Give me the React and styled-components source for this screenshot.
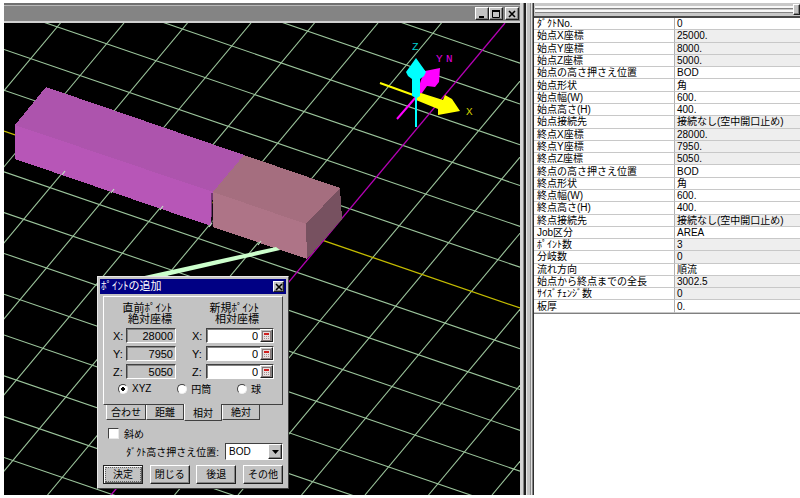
import React, { useState } from "react";
import styled, { createGlobalStyle, css } from "styled-components";

const rows = [
  { label: "ﾀﾞｸﾄNo.", value: "0" },
  { label: "始点X座標", value: "25000.", locked: true },
  { label: "始点Y座標", value: "8000.", locked: true },
  { label: "始点Z座標", value: "5000.", locked: true },
  { label: "始点の高さ押さえ位置", value: "BOD" },
  { label: "始点形状", value: "角" },
  { label: "始点幅(W)", value: "600." },
  { label: "始点高さ(H)", value: "400." },
  { label: "始点接続先", value: "接続なし(空中開口止め)", locked: true },
  { label: "終点X座標", value: "28000.", locked: true },
  { label: "終点Y座標", value: "7950.", locked: true },
  { label: "終点Z座標", value: "5050.", locked: true },
  { label: "終点の高さ押さえ位置", value: "BOD" },
  { label: "終点形状", value: "角" },
  { label: "終点幅(W)", value: "600." },
  { label: "終点高さ(H)", value: "400." },
  { label: "終点接続先", value: "接続なし(空中開口止め)", locked: true },
  { label: "Job区分", value: "AREA" },
  { label: "ﾎﾟｲﾝﾄ数", value: "3", locked: true },
  { label: "分岐数", value: "0", locked: true },
  { label: "流れ方向", value: "順流" },
  { label: "始点から終点までの全長", value: "3002.5", locked: true },
  { label: "ｻｲｽﾞﾁｪﾝｼﾞ数", value: "0", locked: true },
  { label: "板厚", value: "0." }
];

const lastPoint = { X: "28000", Y: "7950", Z: "5050" };

// grid lines, k = 0 is the axis
const xLines = [-9, -8, -7, -6, -5, -4, -3, -2, -1, 1, 2, 3, 4, 5, 6, 7, 8];
const yLines = [-8, -7, -6, -5, -4, -3, -2, -1, 1, 2, 3, 4, 5, 6];
const ticks = [
  [62, 175],
  [111, 193],
  [160, 210],
  [209, 227],
  [258, 245]
];

const Scene = () => (
  <Drawing
    viewBox="4 23 516 472"
    preserveAspectRatio="xMinYMin slice"
    role="img"
    aria-label="3D view"
  >
    <g stroke="#9cc59c" strokeWidth="1.1">
      {xLines.map((k) => (
        <line key={k} x1="4" y1={131 + k * 40.8} x2="520" y2={308 + k * 40.8} />
      ))}
      {yLines.map((k) => (
        <line
          key={k}
          x1={505 + k * 63.5}
          y1="23"
          x2={111 + k * 63.5}
          y2="495"
        />
      ))}
    </g>
    <line x1="4" y1="131" x2="520" y2="308" stroke="#c4bc00" strokeWidth="1.3" />
    <line x1="505" y1="23" x2="111" y2="495" stroke="#b400b4" strokeWidth="1.3" />

    <g shapeRendering="crispEdges">
      <polygon points="15,125 46,87 244,155 213,192" fill="#ad54ad" />
      <polygon points="15,125 213,192 211,226 15,159" fill="#b756b7" />
      <polygon points="213,192 244,155 340,188 306,224" fill="#a56e7f" />
      <polygon points="213,192 306,224 307,259 213,227" fill="#ae7487" />
      <polygon points="306,224 340,188 342,219 307,259" fill="#775160" />
    </g>
    <line x1="212" y1="193" x2="212" y2="226" stroke="#2c182c" />
    <g stroke="#c2ddc4" strokeWidth="1.2">
      {ticks.map(([x, y]) => (
        <line key={x} x1={x} y1={y} x2={x + 3} y2={y - 4} />
      ))}
    </g>
    <polygon points="140,277 276,247 280,250 162,277" fill="#ccffcc" />

    <line x1="416" y1="97" x2="397" y2="119" stroke="#ff00ff" strokeWidth="2" />
    <polygon
      points="440,68 425,71 421,80 416,96 422,93 427,86 435,87 439,82"
      fill="#ff00ff"
    />
    <line x1="380" y1="83" x2="416" y2="96" stroke="#ffff00" strokeWidth="2" />
    <polygon
      points="416,95 421,93 443,100 445,95 452,99 460,111 438,115 438,109 416,100"
      fill="#ffff00"
    />
    <line x1="416" y1="95" x2="416" y2="127" stroke="#00ffff" strokeWidth="2" />
    <polygon
      points="416,58 426,72 424,76 420,79 420,96 417,98 412,96 412,79 408,76 406,72"
      fill="#00ffff"
    />
    <AxisText x="412" y="50" fill="#00d0d0">
      Z
    </AxisText>
    <AxisText x="436" y="62" fill="#e000e0">
      Y
    </AxisText>
    <AxisText x="446" y="62" fill="#e000e0">
      N
    </AxisText>
    <AxisText x="466" y="115" fill="#d0d000">
      X
    </AxisText>
  </Drawing>
);

const CloseIcon = () => (
  <svg width="8" height="8" viewBox="0 0 8 8" aria-hidden="true">
    <path d="M1 1L7 7M7 1L1 7" stroke="#000" strokeWidth="1.6" />
  </svg>
);

const CalcIcon = () => (
  <svg width="9" height="10" viewBox="0 0 9 10" aria-hidden="true">
    <rect x="0.5" y="0.5" width="8" height="9" fill="#e8e0e0" stroke="#857878" />
    <path d="M2 3H7" stroke="#d02020" strokeWidth="2" />
    <path d="M2 5.5H7M2 7.5H7" stroke="#a09090" strokeDasharray="1 1" />
  </svg>
);

const PointDialog = () => {
  const [mode, setMode] = useState("XYZ");
  const [tab, setTab] = useState("相対");
  const [offset, setOffset] = useState({ X: "0", Y: "0", Z: "0" });

  return (
    <Dialog role="dialog" aria-labelledby="dialogTitle">
      <DialogTitle>
        <span id="dialogTitle">ﾎﾟｲﾝﾄの追加</span>
        <DialogClose aria-label="Close">
          <CloseIcon />
        </DialogClose>
      </DialogTitle>
      <DialogBody>
        <Page>
          <Columns>
            <Column>
              <Heading>
                <span>直前ﾎﾟｲﾝﾄ</span>
                <span>絶対座標</span>
              </Heading>
              {["X", "Y", "Z"].map((axis) => (
                <Field key={axis}>
                  <label htmlFor={"last" + axis}>{axis}:</label>
                  <Sunken $locked>
                    <NumberInput id={"last" + axis} value={lastPoint[axis]} readOnly />
                  </Sunken>
                </Field>
              ))}
            </Column>
            <Column $wide>
              <Heading $wide>
                <span>新規ﾎﾟｲﾝﾄ</span>
                <span>相対座標</span>
              </Heading>
              {["X", "Y", "Z"].map((axis) => (
                <Field key={axis}>
                  <label htmlFor={"new" + axis}>{axis}:</label>
                  <Sunken>
                    <NumberInput
                      id={"new" + axis}
                      value={offset[axis]}
                      onChange={(e) =>
                        setOffset({ ...offset, [axis]: e.target.value })
                      }
                    />
                    <CalcButton aria-label={"Calculator " + axis}>
                      <CalcIcon />
                    </CalcButton>
                  </Sunken>
                </Field>
              ))}
            </Column>
          </Columns>
          <Modes>
            {["XYZ", "円筒", "球"].map((name) => (
              <Mode key={name}>
                <Radio
                  type="radio"
                  name="mode"
                  checked={mode === name}
                  onChange={() => setMode(name)}
                />
                {name}
              </Mode>
            ))}
          </Modes>
        </Page>
        <Tabs role="tablist">
          {["合わせ", "距離", "相対", "絶対"].map((name) => (
            <Tab
              key={name}
              role="tab"
              aria-selected={tab === name}
              $active={tab === name}
              onClick={() => setTab(name)}
            >
              {name}
            </Tab>
          ))}
        </Tabs>
        <Slant>
          <Check type="checkbox" />
          斜め
        </Slant>
        <HeightRow>
          <label htmlFor="heightPos">ﾀﾞｸﾄ高さ押さえ位置:</label>
          <SelectBox>
            <Select id="heightPos" defaultValue="BOD">
              <option>BOD</option>
            </Select>
            <Arrow>
              <svg width="7" height="4" viewBox="0 0 7 4" aria-hidden="true">
                <path d="M0 0H7L3.5 4Z" />
              </svg>
            </Arrow>
          </SelectBox>
        </HeightRow>
        <Actions>
          <Button $primary>
            <span>決定</span>
          </Button>
          <Button>閉じる</Button>
          <Button>後退</Button>
          <Button>その他</Button>
        </Actions>
      </DialogBody>
    </Dialog>
  );
};

const App = () => {
  return (
    <>
      <GlobalStyle />
      <Container>
        <ViewWindow>
          <TitleBar>
            <WindowButton aria-label="Minimize">
              <svg width="8" height="8" viewBox="0 0 8 8" aria-hidden="true">
                <path d="M1 7H6" stroke="#000" strokeWidth="2" />
              </svg>
            </WindowButton>
            <WindowButton aria-label="Maximize">
              <svg width="8" height="8" viewBox="0 0 8 8" aria-hidden="true">
                <path d="M0.5 1V7.5H7.5V1" fill="none" stroke="#000" />
                <path d="M0 1H8" stroke="#000" strokeWidth="2" />
              </svg>
            </WindowButton>
            <WindowButton aria-label="Close" $apart>
              <CloseIcon />
            </WindowButton>
          </TitleBar>
          <View>
            <Scene />
            <PointDialog />
          </View>
        </ViewWindow>
        <Splitter />
        <Panel>
          <Grip>
            <Ridges />
            <GripButton aria-label="Close panel" />
          </Grip>
          <Table>
            <tbody>
              {rows.map((row) => (
                <tr key={row.label}>
                  <Label scope="row">{row.label}</Label>
                  <Value $locked={row.locked}>{row.value}</Value>
                </tr>
              ))}
            </tbody>
          </Table>
        </Panel>
      </Container>
    </>
  );
};

export default App;

const GlobalStyle = createGlobalStyle`
  * {
    box-sizing: border-box;
  }
  body {
    margin: 0;
    background: white;
    color: black;
    font-family: "Liberation Sans", "Noto Sans CJK JP", sans-serif;
    font-size: 10px;
  }
  button, input, select {
    font: inherit;
    color: inherit;
    margin: 0;
    padding: 0;
    border-radius: 0;
  }
`;

const raised = css`
  background: #c3c3c3;
  border: 1px solid;
  border-color: white #202020 #202020 white;
  box-shadow: inset -1px -1px 0 #848484;
`;

const Container = styled.div`
  min-height: 100vh;
  padding: 3px 0 3px 4px;
  display: flex;
`;

const ViewWindow = styled.div`
  flex: 1;
  min-width: 0;
  display: flex;
  flex-direction: column;
  border-top: 2px solid #707070;
`;

const TitleBar = styled.div`
  height: 18px;
  display: flex;
  align-items: center;
  justify-content: flex-end;
  padding-right: 1px;
  background: #848484;
  border-top: 1px solid #b8b8b8;
  border-bottom: 2px solid #d0d0d0;
`;

const WindowButton = styled.button`
  ${raised}
  width: 14px;
  height: 13px;
  display: flex;
  align-items: center;
  justify-content: center;
  margin-left: ${(p) => (p.$apart ? "2px" : "0")};
`;

const View = styled.div`
  flex: 1;
  min-height: 472px;
  position: relative;
  background: black;
  overflow: hidden;
`;

const Drawing = styled.svg`
  position: absolute;
  inset: 0;
  width: 100%;
  height: 100%;
`;

const AxisText = styled.text`
  font-family: "Liberation Mono", monospace;
  font-size: 11px;
`;

const Splitter = styled.div`
  width: 14px;
  background: linear-gradient(
    to right,
    #d4d4d4 0 3px,
    #848484 3px 4px,
    #202020 4px 6px,
    #e8e8e8 6px 7px,
    #c3c3c3 7px 10px,
    #909090 10px 11px,
    #e0e0e0 11px 12px,
    #848484 12px 13px,
    #303030 13px 14px
  );
`;

const Panel = styled.div`
  flex: 0 1 266px;
  min-width: 0;
`;

const Grip = styled.div`
  height: 15px;
  display: flex;
  align-items: center;
  padding-left: 1px;
  background: #c8c8c8;
  border-bottom: 2px solid #484848;
`;

const Ridges = styled.div`
  flex: 1;
  height: 8px;
  background: linear-gradient(
    #f8f8f8 0 2px,
    #848484 2px 3px,
    #c8c8c8 3px 4px,
    #f8f8f8 4px 6px,
    #848484 6px 7px,
    #c8c8c8 7px
  );
`;

const GripButton = styled.button`
  ${raised}
  width: 7px;
  height: 11px;
`;

const Table = styled.table`
  width: 100%;
  height: 296px;
  table-layout: fixed;
  border-collapse: separate;
  border-spacing: 0;
  line-height: 11px;
  white-space: nowrap;
  border-bottom: 1px solid #808080;
`;

const Label = styled.th`
  width: 140px;
  padding: 0 0 0 3px;
  font-weight: 400;
  text-align: left;
  border-bottom: 1px solid #c8c8c8;
  overflow: hidden;
`;

const Value = styled.td`
  padding: 0 0 0 2px;
  border-left: 1px solid #b0b0b0;
  border-bottom: 1px solid #c8c8c8;
  background: ${(p) => (p.$locked ? "#eeeeee" : "white")};
  overflow: hidden;
`;

const Dialog = styled.div`
  position: absolute;
  left: 93px;
  top: 253px;
  width: 192px;
  padding: 2px;
  background: #c3c3c3;
  border: 1px solid;
  border-color: #e8e8e8 #404040 #404040 #e8e8e8;
`;

const DialogTitle = styled.div`
  height: 15px;
  display: flex;
  align-items: center;
  justify-content: space-between;
  padding: 0 2px 0 1px;
  background: #000084;
  color: white;
  font-size: 11px;
  line-height: 15px;
`;

const DialogClose = styled.button`
  ${raised}
  width: 11px;
  height: 11px;
  display: flex;
  align-items: center;
  justify-content: center;
`;

const DialogBody = styled.div`
  display: flex;
  flex-direction: column;
  padding: 2px 3px;
`;

const Page = styled.div`
  padding: 6px 8px 9px;
  border: 1px solid;
  border-color: white #404040 #404040 white;
`;

const Columns = styled.div`
  display: flex;
  justify-content: space-between;
  padding-left: 1px;
`;

const Column = styled.div`
  width: ${(p) => (p.$wide ? "82px" : "63px")};
  display: flex;
  flex-direction: column;
  gap: 3px;
`;

const Heading = styled.div`
  display: flex;
  flex-direction: column;
  align-items: flex-end;
  padding-right: ${(p) => (p.$wide ? "15px" : "4px")};
  font-size: 11px;
  line-height: 11px;
`;

const Field = styled.div`
  display: flex;
  align-items: center;
  justify-content: space-between;
  font-size: 11px;
`;

const Sunken = styled.div`
  width: ${(p) => (p.$locked ? "50px" : "68px")};
  height: 15px;
  display: flex;
  align-items: center;
  background: ${(p) => (p.$locked ? "#c3c3c3" : "white")};
  border: 1px solid;
  border-color: #404040 white white #404040;
  box-shadow: inset 1px 1px 0 #848484;
`;

const NumberInput = styled.input`
  flex: 1;
  min-width: 0;
  height: 13px;
  padding-right: 2px;
  border: none;
  outline: none;
  background: transparent;
  text-align: right;
`;

const CalcButton = styled.button`
  ${raised}
  width: 13px;
  height: 13px;
  display: flex;
  align-items: center;
  justify-content: center;
`;

const Modes = styled.div`
  display: flex;
  justify-content: space-between;
  padding: 3px 13px 0 6px;
`;

const Mode = styled.label`
  display: flex;
  align-items: center;
  gap: 4px;
  height: 13px;
`;

const Radio = styled.input`
  appearance: none;
  width: 10px;
  height: 10px;
  border: 1px solid;
  border-color: #404040 #f0f0f0 #f0f0f0 #404040;
  && {
    border-radius: 50%;
  }
  background: white;
  &:checked {
    background: radial-gradient(circle, black 2px, white 2px);
  }
`;

const Tabs = styled.div`
  height: 17px;
  display: flex;
  align-items: flex-start;
  padding-left: 3px;
`;

const Tab = styled.button`
  flex: 0 0 auto;
  height: ${(p) => (p.$active ? "17px" : "15px")};
  padding: 0 4px;
  margin-top: ${(p) => (p.$active ? "-1px" : "0")};
  padding-top: ${(p) => (p.$active ? "2px" : "0")};
  background: #c3c3c3;
  border: 1px solid;
  border-color: transparent #404040 #404040 white;
  border-top: none;
  min-width: 38px;
  line-height: 13px;
`;

const Slant = styled.label`
  display: flex;
  align-items: center;
  gap: 5px;
  padding: 4px 0 0 5px;
`;

const Check = styled.input`
  appearance: none;
  width: 11px;
  height: 11px;
  background: white;
  border: 1px solid;
  border-color: #404040 #e8e8e8 #e8e8e8 #404040;
  &:checked {
    background: #404040;
  }
`;

const HeightRow = styled.div`
  display: flex;
  align-items: center;
  justify-content: flex-end;
  gap: 6px;
  padding-top: 2px;
`;

const SelectBox = styled.div`
  position: relative;
  width: 58px;
  height: 17px;
`;

const Select = styled.select`
  appearance: none;
  width: 100%;
  height: 100%;
  padding-left: 3px;
  background: white;
  border: 1px solid;
  border-color: #404040 white white #404040;
  outline: none;
`;

const Arrow = styled.span`
  ${raised}
  position: absolute;
  top: 1px;
  right: 1px;
  bottom: 1px;
  width: 14px;
  display: flex;
  align-items: center;
  justify-content: center;
  pointer-events: none;
`;

const Actions = styled.div`
  display: flex;
  justify-content: space-between;
  padding-top: 5px;
`;

const Button = styled.button`
  ${raised}
  width: 40px;
  height: 19px;
  line-height: 13px;
  white-space: nowrap;
  ${(p) =>
    p.$primary &&
    css`
      border-color: #202020;
      box-shadow: inset 1px 1px 0 white, inset -1px -1px 0 #606060;
    `}
  span {
    display: block;
    margin: 0 2px;
    outline: 1px dotted #606060;
  }
`;
